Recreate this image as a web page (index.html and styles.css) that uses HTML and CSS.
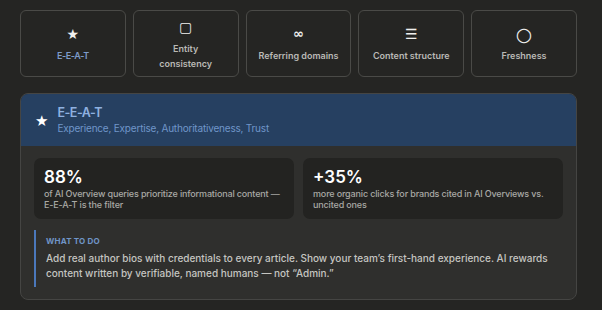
FILE: index.html
```html
<!DOCTYPE html>
<html lang="en">
<head>
    <meta charset="UTF-8">
    <meta name="viewport" content="width=device-width, initial-scale=1.0">
    <title>AI Overview signals</title>
    <link rel="stylesheet" href="styles.css">
</head>
<body>
    <div class="wrap">

    <div class="tabs">
        <div class="tab active">
            <span class="tab-icon">★</span>
            <span class="tab-label">E-E-A-T</span>
        </div>
        <div class="tab">
            <span class="tab-icon">▢</span>
            <span class="tab-label">Entity<br>consistency</span>
        </div>
        <div class="tab">
            <span class="tab-icon small">∞</span>
            <span class="tab-label">Referring domains</span>
        </div>
        <div class="tab">
            <span class="tab-icon">☰</span>
            <span class="tab-label">Content structure</span>
        </div>
        <div class="tab">
            <span class="tab-icon big">○</span>
            <span class="tab-label">Freshness</span>
        </div>
    </div>

    <div class="card">
        <div class="card-head">
            <span class="head-icon">★</span>
            <div>
                <div class="head-title">E-E-A-T</div>
                <div class="head-sub">Experience, Expertise, Authoritativeness, Trust</div>
            </div>
        </div>
        <div class="card-body">
            <div class="stats">
                <div class="stat">
                    <div class="stat-num">88%</div>
                    <div class="stat-txt">of AI Overview queries prioritize informational content — E-E-A-T is the filter</div>
                </div>
                <div class="stat">
                    <div class="stat-num">+35%</div>
                    <div class="stat-txt">more organic clicks for brands cited in AI Overviews vs. uncited ones</div>
                </div>
            </div>
            <div class="todo">
                <div class="todo-label">What to do</div>
                <p class="todo-txt">Add real author bios with credentials to every article. Show your team’s first-hand experience. AI rewards content written by verifiable, named humans — not “Admin.”</p>
            </div>
        </div>
    </div>

    </div>
</body>
</html>
```

FILE: styles.css
```css
* {
    box-sizing: border-box;
}
body {
    margin: 0;
    background-color: #252523;
    font-family: Inter, "Noto Sans", sans-serif;
    color: #c8c8c4;
}
.wrap {
    width: 557px;
    margin-left: 20px;
    padding-top: 10px;
}
.tabs {
    display: flex;
    gap: 7px;
}
.tab {
    flex: 1;
    height: 67px;
    border: 1px solid #4a4a47;
    border-radius: 6px;
    display: flex;
    flex-direction: column;
    justify-content: center;
    align-items: center;
    gap: 6px;
    text-align: center;
    padding-top: 2px;
}
.tab-icon {
    font-family: "DejaVu Sans", sans-serif;
    font-size: 14px;
    line-height: 16px;
    color: #f0f0ee;
}
.tab-icon.small {
    font-size: 13px;
    font-weight: bold;
}
.tab-icon.big {
    font-size: 19px;
}
.tab-label {
    font-size: 9px;
    line-height: 15px;
    font-weight: 600;
    color: #b9b9b5;
}
.tab.active .tab-label {
    color: #7d9cc9;
    letter-spacing: -0.4px;
}
.card {
    margin-top: 16px;
    background-color: #2f2f2d;
    border: 1px solid #454543;
    border-radius: 8px;
    overflow: hidden;
}
.card-head {
    background-color: #264061;
    height: 52px;
    display: flex;
    align-items: center;
    gap: 9px;
    padding-left: 14px;
}
.head-icon {
    font-family: "DejaVu Sans", sans-serif;
    font-size: 15px;
    color: #ffffff;
    padding-top: 2px;
}
.head-title {
    font-size: 12.5px;
    font-weight: 600;
    line-height: 16px;
    letter-spacing: -0.5px;
    color: #8fb1e0;
}
.head-sub {
    font-size: 10px;
    line-height: 15px;
    letter-spacing: -0.2px;
    color: #7096c9;
}
.card-body {
    padding: 12px 13px 12px 13px;
}
.stats {
    display: flex;
    gap: 9px;
}
.stat {
    flex: 1;
    background-color: #232321;
    border-radius: 7px;
    padding: 8px 10px 9px 10px;
    height: 61px;
}
.stat-num {
    font-size: 17px;
    font-weight: 600;
    line-height: 22px;
    color: #ffffff;
}
.stat-txt {
    font-size: 9px;
    font-weight: 500;
    line-height: 11px;
    letter-spacing: -0.15px;
    color: #a9a9a5;
}
.todo {
    margin-top: 11px;
    border-left: 2px solid #4b78bb;
    padding: 6px 0 6px 10px;
}
.todo-label {
    font-size: 8px;
    font-weight: 700;
    letter-spacing: 0.2px;
    text-transform: uppercase;
    color: #6f95c8;
}
.todo-txt {
    margin: 5px 0 0 0;
    font-size: 10px;
    font-weight: 500;
    line-height: 15px;
    color: #c5c5c1;
}
```
